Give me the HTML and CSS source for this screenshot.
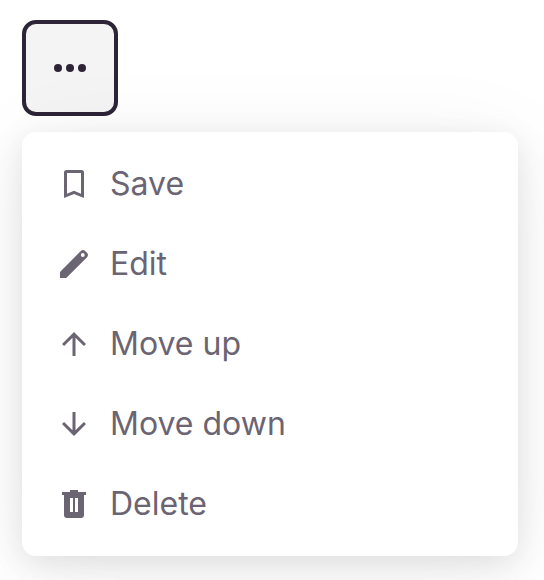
FILE: index.html
```html
<!DOCTYPE html>
<html lang="en">
<head>
<meta charset="utf-8">
<meta name="viewport" content="width=device-width, initial-scale=1">
<title>Actions menu</title>
<link rel="stylesheet" href="styles.css">
</head>
<body>
<button class="trigger" type="button" aria-label="More actions" aria-haspopup="menu" aria-expanded="true">
<svg class="dots" viewBox="0 0 40 40" aria-hidden="true"><circle cx="8" cy="20" r="4"/><circle cx="20" cy="20" r="4"/><circle cx="32" cy="20" r="4"/></svg>
</button>
<div class="menu" role="menu">
<button class="item" type="button" role="menuitem"><svg class="icon" viewBox="0 0 32 32" aria-hidden="true"><path fill-rule="evenodd" d="M8.500 2h15a2.500 2.500 0 0 1 2.500 2.500V30l-10-4L6 30V4.500A2.500 2.500 0 0 1 8.500 2zM9 5v20.800l7-3 7 3V5z"/></svg><span>Save</span></button>
<button class="item" type="button" role="menuitem"><svg class="icon" viewBox="0 0 32 32" aria-hidden="true"><path fill-rule="evenodd" d="M2 24 22.600 3.200q2.400-2.400 4.800 0l1.400 1.400q2.400 2.400 0 4.800L8.200 30H2zM22.900 7a1.900 1.900 0 1 0 3.800 0a1.900 1.900 0 1 0-3.800 0z"/></svg><span>Edit</span></button>
<button class="item" type="button" role="menuitem"><svg class="icon" viewBox="0 0 32 32" aria-hidden="true"><path d="m4 16 2.100 2.100 8.400-8.400V28h3V9.700l8.400 8.400L28 16 16 4z"/></svg><span>Move up</span></button>
<button class="item" type="button" role="menuitem"><svg class="icon" viewBox="0 0 32 32" aria-hidden="true"><path d="m28 16-2.100-2.100-8.400 8.400V4h-3v18.300l-8.400-8.400L4 16l12 12z"/></svg><span>Move down</span></button>
<button class="item" type="button" role="menuitem"><svg class="icon" viewBox="0 0 32 32" aria-hidden="true"><path fill-rule="evenodd" d="M12 2h8v2h8v3h-2v20q0 3-3 3H9q-3 0-3-3V7H4V4h8zM12 10v14h3V10zM17 10v14h3V10z"/></svg><span>Delete</span></button>
</div>
</body>
</html>
```

FILE: styles.css
```css
* {
  box-sizing: border-box;
}

body {
  margin: 0;
  padding: 20px 26px 24px 22px;
  background: #fff;
  color: #6b6472;
  font-family: Inter, "Liberation Sans", sans-serif;
}

.trigger {
  display: flex;
  align-items: center;
  justify-content: center;
  width: 96px;
  height: 96px;
  padding: 0;
  border: 4px solid #2d2438;
  border-radius: 14px;
  background: #f4f4f4;
  color: #2d2438;
}

.dots {
  width: 40px;
  height: 40px;
  fill: currentColor;
}

.menu {
  display: flex;
  flex-direction: column;
  margin-top: 16px;
  padding: 12px 0;
  border-radius: 14px;
  background: #fff;
  box-shadow: 0 8px 32px rgba(0, 0, 0, 0.1), 0 12px 96px rgba(0, 0, 0, 0.06);
}

.item {
  display: flex;
  align-items: center;
  gap: 20px;
  height: 80px;
  padding: 0 36px;
  border: 0;
  background: none;
  color: inherit;
  font: 400 32px/48px Inter, "Liberation Sans", sans-serif;
  text-align: left;
}

.icon {
  flex: none;
  width: 32px;
  height: 32px;
  fill: currentColor;
}
```
